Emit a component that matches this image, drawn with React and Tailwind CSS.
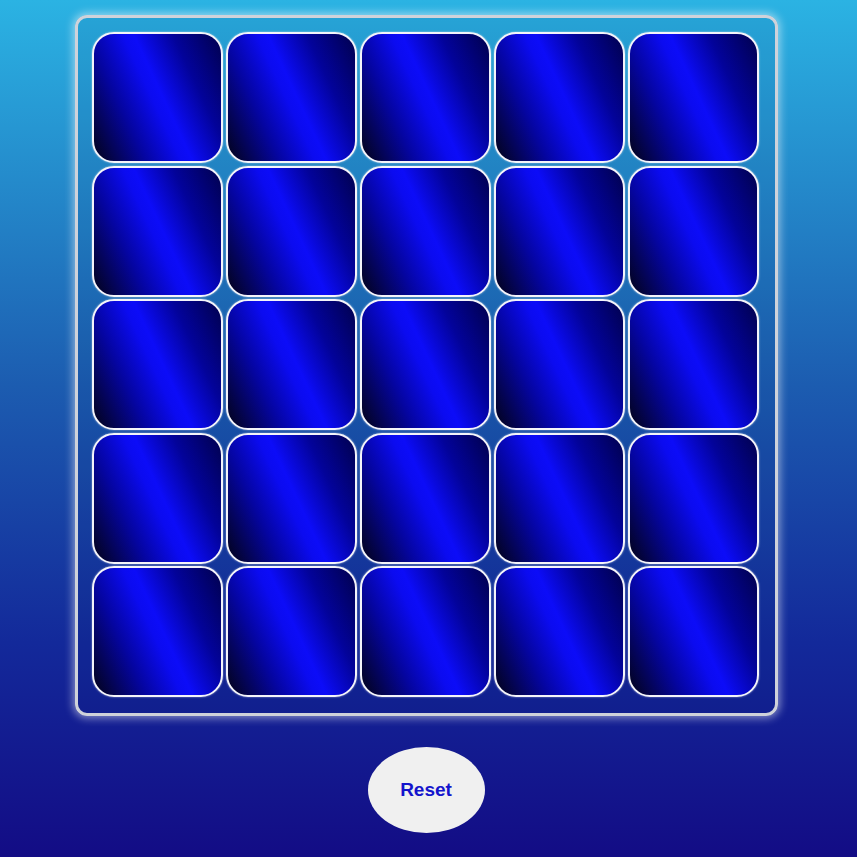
export default function App() {
  const cells = Array.from({ length: 25 })
  return (
    <div className="h-[857px] w-full overflow-hidden bg-[linear-gradient(to_bottom,#2bb3e3_0%,#1c5cb0_45%,#13299a_75%,#130c85_100%)] font-['Liberation_Sans',Arial,sans-serif]">
      <div className="flex flex-col items-center pt-[15px] pr-[5px]">
        <div className="w-[703px] h-[701px] rounded-[12px] border-[3px] border-[#cfd2da] shadow-[0_0_9px_2px_rgba(255,255,255,0.5)] bg-[rgba(0,20,90,0.08)] px-[14px] pt-[14px]">
          <div className="grid grid-cols-[repeat(5,131.5px)] grid-rows-[repeat(5,131px)] gap-[2.5px]">
            {cells.map((_, i) => (
              <div
                key={i}
                className="rounded-[22px] border-2 border-[#f4f4fa] shadow-[0_0_2px_rgba(255,255,255,0.6)] bg-[linear-gradient(65deg,#030318_0%,#0505a0_28%,#0b0bf0_47%,#0c0cf8_53%,#03039a_74%,#01014e_100%)]"
              />
            ))}
          </div>
        </div>
        <button className="mt-[31px] w-[117px] h-[86px] rounded-[50%] bg-[#f0f0f0] text-[#1414cc] text-[19px] font-bold">
          Reset
        </button>
      </div>
    </div>
  )
}
